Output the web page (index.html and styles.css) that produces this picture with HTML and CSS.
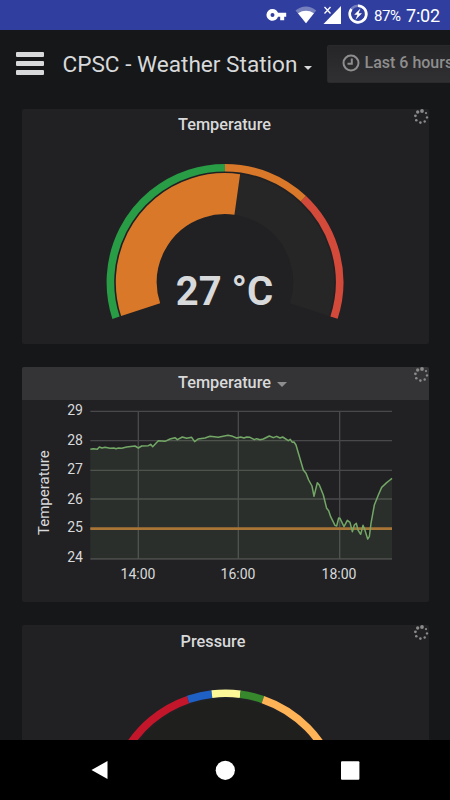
FILE: index.html
```
<!DOCTYPE html>
<html lang="en">
<head>
    <meta charset="UTF-8">
    <meta name="viewport" content="width=device-width, initial-scale=1.0">
    <title>CPSC - Weather Station</title>
    <link rel="stylesheet" href="styles.css">
</head>
<body>
    <svg class="sprite" aria-hidden="true">
        <symbol id="spinner" viewBox="0 0 16 16">
            <circle cx="9" cy="2" r="1.9"></circle>
            <circle cx="4.7" cy="3" r="1.7"></circle>
            <circle cx="2.4" cy="6.8" r="1.4"></circle>
            <circle cx="3.3" cy="11.3" r="1.3"></circle>
            <circle cx="7.4" cy="13.6" r="1.3"></circle>
            <circle cx="11.7" cy="12.5" r="1.2"></circle>
            <circle cx="14" cy="8.4" r="1.2"></circle>
            <circle cx="13" cy="4.1" r="1.1"></circle>
        </symbol>
    </svg>

    <div class="status-bar">
        <svg class="status-icons" viewBox="0 0 104 30">
            <path fill="#fff" fill-rule="evenodd" d="M6.500 9a5.900 5.900 0 0 1 5.500 3.800h8.200v3.900h-2v3.600h-4v-3.600H12A5.900 5.900 0 1 1 6.500 9zm0 3.900a2 2 0 1 0 0 4 2 2 0 0 0 0-4z"></path>
            <path fill="#7680bd" d="M29.500 10.500Q40 2.500 50.200 10.500L40 23.200z"></path>
            <path fill="#fff" d="M32 13.200Q40 8.500 47.900 13.200L40 23.200z"></path>
            <path fill="#fff" d="M75 6v18H57.500z"></path>
            <path class="no-data" d="M58.500 7l6 6.500m0-6.500l-6 6.500"></path>
            <circle cx="92" cy="14" r="8.300" class="battery-track"></circle>
            <path class="battery-ring" d="M92 5.700a8.300 8.300 0 1 1-6.600 3.300"></path>
            <path fill="#fff" d="M94.500 8.500l-6.300 6.300h3.300l-2 5 6.500-6.600h-3.400z"></path>
        </svg>
        <span class="battery">87%</span>
        <span class="clock">7:02</span>
    </div>

    <div class="navbar">
        <div class="menu-toggle">
            <span></span>
            <span></span>
            <span></span>
        </div>
        <h1 class="dashboard-title">CPSC - Weather Station</h1>
        <span class="caret"></span>
        <div class="time-picker">
            <svg viewBox="0 0 18 18">
                <circle cx="9" cy="9" r="7.500"></circle>
                <path d="M9.800 4.500v5.300H5.500"></path>
            </svg>
            Last 6 hours
        </div>
    </div>

    <main class="dashboard">
        <section class="panel">
            <div class="panel-header"><h2>Temperature</h2></div>
            <svg class="spinner"><use href="#spinner"></use></svg>
            <svg class="gauge" viewBox="0 33 407 202">
                <g transform="translate(203 173.300) rotate(-198)">
                    <circle class="arc band" r="88.700" pathLength="360" stroke="#262626" stroke-dasharray="216 360"></circle>
                    <circle class="arc band" r="88.700" pathLength="360" stroke="#d97829" stroke-dasharray="116 360"></circle>
                    <circle class="arc ring" r="114.600" pathLength="360" stroke="#299c46" stroke-dasharray="108 360"></circle>
                    <circle class="arc ring" r="114.600" pathLength="360" stroke="#d97829" stroke-dasharray="0 108 43.200 360"></circle>
                    <circle class="arc ring" r="114.600" pathLength="360" stroke="#d44a3a" stroke-dasharray="0 151.200 64.800 360"></circle>
                </g>
                <text class="gauge-value" x="202.500" y="196">27 °C</text>
            </svg>
        </section>

        <section class="panel">
            <div class="panel-header hovered"><h2>Temperature</h2><span class="panel-caret"></span></div>
            <svg class="spinner"><use href="#spinner"></use></svg>
            <!-- three units per pixel -->
            <svg class="graph" viewBox="36 135 1221 606">
                <path class="grid" d="M241 169H1146M241 257H1146M241 346H1146M241 432H1146M241 521H1146M241 612H1146M385 169V612M685 169V612M989 169V612"></path>
                <path class="area" d="M241 612V283L250 281 262 283 268 276 276 279 285 277 300 280 312 279 318 281 325 279 335 280 350 276 375 273 385 279 395 273 415 272 422 268 428 275 445 257 465 259 480 252 495 248 502 254 517 246 530 250 545 247 554 260 564 252 585 249 600 244 625 247 654 241 668 244 680 249 692 246 702 249 710 246 720 247 733 254 740 251 750 254 760 252 778 243 790 248 800 244 810 249 818 246 835 257 841 253 847 262 852 261 858 270 880 345 888 355 896 375 906 393 912 424 922 383 928 390 940 420 950 460 956 467 962 485 975 511 980 513 986 489 990 490 1002 515 1012 496 1020 502 1027 530 1033 510 1039 505 1044 525 1052 538 1059 511 1064 523 1073 552 1078 545 1083 505 1093 450 1105 420 1115 397 1130 383 1140 375 1146 370V612z"></path>
                <path class="threshold" d="M241 521H1146"></path>
                <path class="series" d="M241 283L250 281 262 283 268 276 276 279 285 277 300 280 312 279 318 281 325 279 335 280 350 276 375 273 385 279 395 273 415 272 422 268 428 275 445 257 465 259 480 252 495 248 502 254 517 246 530 250 545 247 554 260 564 252 585 249 600 244 625 247 654 241 668 244 680 249 692 246 702 249 710 246 720 247 733 254 740 251 750 254 760 252 778 243 790 248 800 244 810 249 818 246 835 257 841 253 847 262 852 261 858 270 880 345 888 355 896 375 906 393 912 424 922 383 928 390 940 420 950 460 956 467 962 485 975 511 980 513 986 489 990 490 1002 515 1012 496 1020 502 1027 530 1033 510 1039 505 1044 525 1052 538 1059 511 1064 523 1073 552 1078 545 1083 505 1093 450 1105 420 1115 397 1130 383 1140 375 1146 370"></path>
                <g class="y-labels">
                    <text x="219" y="180">29</text>
                    <text x="219" y="269">28</text>
                    <text x="219" y="357">27</text>
                    <text x="219" y="446">26</text>
                    <text x="219" y="532">25</text>
                    <text x="219" y="621">24</text>
                </g>
                <g class="x-labels">
                    <text x="384" y="671">14:00</text>
                    <text x="684" y="671">16:00</text>
                    <text x="987" y="671">18:00</text>
                </g>
                <text class="axis-title" transform="translate(118 413) rotate(-90)">Temperature</text>
            </svg>
        </section>

        <section class="panel">
            <div class="panel-header with-menu"><h2>Pressure</h2></div>
            <svg class="spinner"><use href="#spinner"></use></svg>
            <svg class="gauge" viewBox="0 33 407 202">
                <g transform="translate(203.500 183.300) rotate(-198)">
                    <circle class="arc band" r="88.700" pathLength="360" stroke="#1f1f1e" stroke-dasharray="216 360"></circle>
                    <circle class="arc ring" r="115" pathLength="360" stroke="#c4162a" stroke-dasharray="89 360"></circle>
                    <circle class="arc ring" r="115" pathLength="360" stroke="#1f60c4" stroke-dasharray="0 89 12.200 360"></circle>
                    <circle class="arc ring" r="115" pathLength="360" stroke="#fff899" stroke-dasharray="0 101.200 14.200 360"></circle>
                    <circle class="arc ring" r="115" pathLength="360" stroke="#37872d" stroke-dasharray="0 115.400 11.600 360"></circle>
                    <circle class="arc ring" r="115" pathLength="360" stroke="#ffb357" stroke-dasharray="0 127 89 360"></circle>
                </g>
            </svg>
        </section>
    </main>

    <div class="android-nav">
        <svg viewBox="0 0 20 20"><path d="M17.500 1v18L1.500 10z"></path></svg>
        <svg viewBox="0 0 20 20"><circle cx="10.300" cy="10.300" r="9.600"></circle></svg>
        <svg viewBox="0 0 20 20"><rect x="1" y="1.300" width="18.400" height="18.400" rx="1"></rect></svg>
    </div>
</body>
</html>
```
FILE: styles.css
```
:root {
    --body-bg: #161719;
    --panel-bg: #212124;
    --text-color: #d8d9da;
    --text-muted: #8e8e8e;
}

* {
    margin: 0;
    padding: 0;
    box-sizing: border-box;
}

body {
    display: flex;
    flex-direction: column;
    height: 100vh;
    overflow: hidden;
    background: var(--body-bg);
    color: var(--text-color);
    font-family: Roboto, Arial, sans-serif;
}

.sprite {
    display: none;
}

/* Status bar */
.status-bar {
    flex: none;
    display: flex;
    align-items: center;
    height: 30px;
    padding-left: 266px;
    background: #303f9f;
    color: #fff;
}

.status-icons {
    width: 104px;
    height: 30px;
}

.no-data {
    stroke: #fff;
    stroke-width: 1.3;
}

.battery-track,
.battery-ring {
    fill: none;
    stroke: #7680bd;
    stroke-width: 2.6;
}

.battery-ring {
    stroke: #fff;
}

.battery {
    width: 36px;
    padding: 2px 0 0 4px;
    font-size: 15px;
    letter-spacing: -0.4px;
}

.clock {
    padding-top: 1px;
    font-size: 18px;
    letter-spacing: -0.2px;
}

/* Top navigation */
.navbar {
    flex: none;
    display: flex;
    align-items: center;
    height: 79px;
    padding: 0 0 12px 16px;
    white-space: nowrap;
}

.menu-toggle {
    flex: none;
    display: flex;
    flex-direction: column;
    gap: 4px;
    width: 28px;
    margin-right: 18.5px;
}

.menu-toggle span {
    height: 5px;
    border-radius: 1px;
    background: var(--text-color);
}

.dashboard-title {
    flex: none;
    width: 241px;
    padding-top: 1px;
    font-size: 22.6px;
    font-weight: 400;
}

.caret {
    flex: none;
    margin: 8px 15px 0 0;
    border: 4.5px solid transparent;
    border-top-color: var(--text-color);
    border-bottom: 0;
}

.time-picker {
    flex: none;
    display: flex;
    align-items: center;
    gap: 5px;
    width: 140px;
    height: 38px;
    padding: 0 0 3px 14px;
    border: 1px solid #2a2a2c;
    border-radius: 2px;
    background: linear-gradient(#262628, #303032);
    color: var(--text-muted);
    font-size: 16px;
    font-weight: 500;
}

.time-picker svg {
    width: 18px;
    height: 18px;
    margin-top: 2px;
    fill: none;
    stroke: var(--text-muted);
    stroke-width: 2;
}

/* Panels */
.dashboard {
    flex: 1;
    min-height: 0;
    display: flex;
    flex-direction: column;
    gap: 23px;
    padding: 0 21.5px;
    overflow: hidden;
}

.panel {
    position: relative;
    flex: none;
    width: 407px;
    height: 235px;
    border-radius: 2px;
    background: var(--panel-bg);
}

.panel-header {
    display: flex;
    justify-content: center;
    height: 33px;
    padding: 6px 1px 0 0;
    border-radius: 2px 2px 0 0;
}

.panel-header.hovered {
    background: #343436;
}

.panel-header.with-menu {
    padding: 7px 24px 0 0;
}

.panel-header h2 {
    font-size: 16.3px;
    font-weight: 500;
    line-height: 19px;
}

.panel-caret {
    margin: 9px -16px 0 6px;
    width: 10px;
    height: 5px;
    border: 5px solid transparent;
    border-top-color: var(--text-muted);
    border-bottom: 0;
}

.spinner {
    position: absolute;
    top: 0;
    right: 0;
    width: 16px;
    height: 16px;
    fill: #8a8a8a;
}

.gauge,
.graph {
    display: block;
    width: 407px;
    height: 202px;
}

.arc {
    fill: none;
}

.band {
    stroke-width: 41;
}

.ring {
    stroke-width: 7.6;
}

.gauge-value {
    fill: var(--text-color);
    font-size: 40px;
    font-weight: 700;
    text-anchor: middle;
}

/* Graph */
.grid {
    fill: none;
    stroke: #c8c8c8;
    stroke-opacity: 0.24;
    stroke-width: 4;
}

.area {
    fill: #7eb26d;
    fill-opacity: 0.1;
}

.series {
    fill: none;
    stroke: #73a766;
    stroke-width: 4.5;
    stroke-linejoin: round;
}

.threshold {
    stroke: #a87536;
    stroke-width: 8;
}

.y-labels,
.x-labels,
.axis-title {
    fill: var(--text-color);
    font-size: 42px;
}

.y-labels {
    text-anchor: end;
}

.x-labels,
.axis-title {
    text-anchor: middle;
}

.axis-title {
    font-size: 45px;
}

/* Bottom buttons */
.android-nav {
    flex: none;
    display: flex;
    justify-content: center;
    align-items: center;
    gap: 105px;
    height: 60px;
    background: #000;
}

.android-nav svg {
    width: 20px;
    height: 20px;
    fill: #fff;
}
```
